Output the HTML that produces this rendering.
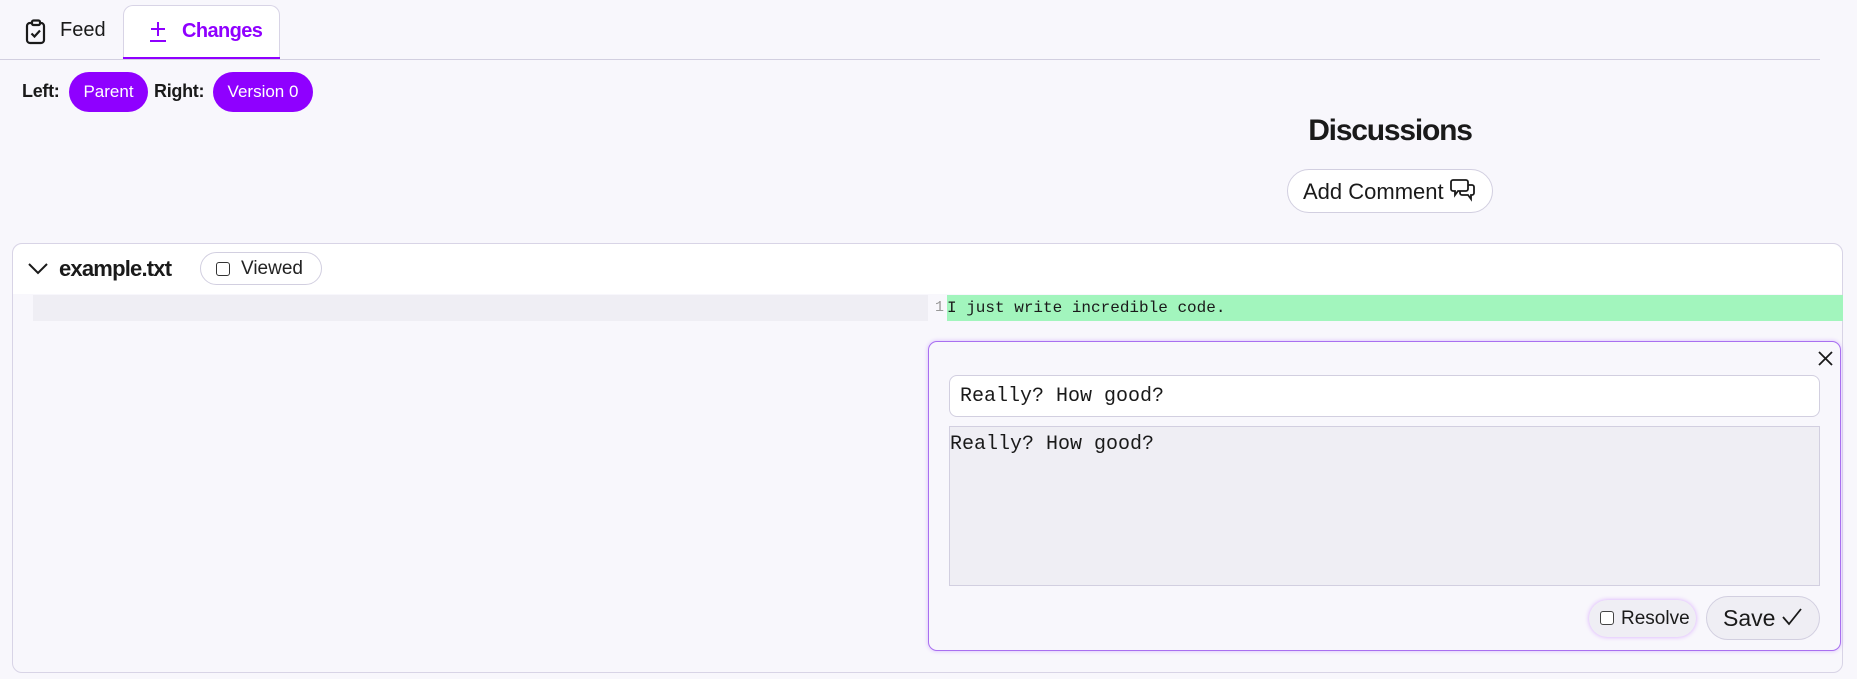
<!DOCTYPE html>
<html><head><style>
*{box-sizing:border-box;margin:0;padding:0}
body{width:1857px;height:679px;background:#f8f7fc;font-family:"Liberation Sans",sans-serif;color:#1a1a1a;position:relative;overflow:hidden}
.a{position:absolute}
.pill{background:#8f00ff;color:#fff;border-radius:20px;font-size:17px;display:flex;align-items:center;justify-content:center}
.mono{font-family:"Liberation Mono","DejaVu Sans Mono",monospace}
</style></head><body>
<svg class="a" style="left:25px;top:19px" width="22" height="26" viewBox="0 0 22 26" fill="none" stroke="#1a1a1a" stroke-width="2.2"><rect x="2" y="4" width="17" height="20" rx="3"/><rect x="7" y="1.5" width="8" height="4.5" rx="1.5" fill="#f8f7fc"/><path d="M6.5 14.5l3 3 5.5-6"/></svg>
<div class="a" style="left:60px;top:19px;font-size:20px">Feed</div>
<div class="a" style="left:123px;top:5px;width:157px;height:55px;background:#fff;border:1px solid #d8d4e6;border-bottom:none;border-radius:10px 10px 0 0"></div>
<div class="a" style="left:123px;top:57px;width:157px;height:3px;background:#8f00ff"></div>
<svg class="a" style="left:148px;top:21px" width="20" height="22" viewBox="0 0 20 22" stroke="#8f00ff" stroke-width="2"><path d="M10 1v14M3 8h14M2 20h16"/></svg>
<div class="a" style="left:182px;top:20px;font-size:20px;font-weight:bold;color:#8f00ff;letter-spacing:-0.6px">Changes</div>
<div class="a" style="left:0;top:59px;width:1820px;height:1px;background:#d2cfe0"></div>
<div class="a" style="left:22px;top:81px;font-size:18px;font-weight:bold;letter-spacing:-0.3px">Left:</div>
<div class="a pill" style="left:69px;top:72px;width:79px;height:40px">Parent</div>
<div class="a" style="left:154px;top:81px;font-size:18px;font-weight:bold;letter-spacing:-0.3px">Right:</div>
<div class="a pill" style="left:213px;top:72px;width:100px;height:40px">Version 0</div>
<div class="a" style="left:1290px;top:114px;width:200px;text-align:center;font-size:30px;font-weight:bold;letter-spacing:-1.2px">Discussions</div>
<div class="a" style="left:1287px;top:169px;width:206px;height:44px;background:#fff;border:1px solid #d2cfe0;border-radius:22px;font-size:22px;padding:9px 0 0 15px">Add Comment</div>
<svg class="a" style="left:1450px;top:178px" width="26" height="24" viewBox="0 0 26 24" fill="none" stroke="#1a1a1a" stroke-width="1.8"><path d="M3 2h13a2 2 0 0 1 2 2v7a2 2 0 0 1-2 2H8l-3 4v-4H3a2 2 0 0 1-2-2V4a2 2 0 0 1 2-2z"/><path d="M18 7h4a2 2 0 0 1 2 2v6a2 2 0 0 1-2 2h-1v4l-3-4h-6a2 2 0 0 1-2-2v-2"/></svg>
<div class="a" style="left:12px;top:243px;width:1831px;height:430px;border:1px solid #d8d4e6;border-radius:10px;background:#f8f7fc"></div>
<div class="a" style="left:13px;top:244px;width:1829px;height:50px;background:#fff;border-radius:10px 10px 0 0"></div>
<svg class="a" style="left:28px;top:262px" width="20" height="14" viewBox="0 0 20 14" fill="none" stroke="#1a1a1a" stroke-width="2"><path d="M1 2l9 9 9-9"/></svg>
<div class="a" style="left:59px;top:256px;font-size:22px;font-weight:bold;letter-spacing:-0.8px">example.txt</div>
<div class="a" style="left:200px;top:252px;width:122px;height:33px;border:1px solid #d2cfe0;border-radius:17px;background:#fff"></div>
<div class="a" style="left:216px;top:262px;width:14px;height:14px;border:1.5px solid #333;border-radius:3px"></div>
<div class="a" style="left:241px;top:258px;font-size:19px;color:#222">Viewed</div>
<div class="a" style="left:33px;top:295px;width:895px;height:26px;background:#efeef4"></div>
<div class="a mono" style="left:935px;top:299px;font-size:15px;color:#999">1</div>
<div class="a mono" style="left:947px;top:295px;width:896px;height:26px;background:#a2f5bd;font-size:16px;padding:4px 0 0 0">I just write incredible code.</div>
<div class="a" style="left:928px;top:341px;width:913px;height:310px;border:1.5px solid #a970f0;border-radius:9px;background:#f8f7fc;box-shadow:0 0 4px #d8b8ff"></div>
<svg class="a" style="left:1817px;top:350px" width="17" height="17" viewBox="0 0 17 17" stroke="#1a1a1a" stroke-width="1.8"><path d="M2 2l13 13M15 2L2 15"/></svg>
<div class="a mono" style="left:949px;top:375px;width:871px;height:42px;background:#fff;border:1px solid #d2cfe0;border-radius:8px;font-size:20px;padding:9px 0 0 10px">Really? How good?</div>
<div class="a mono" style="left:949px;top:426px;width:871px;height:160px;background:#efeef4;border:1px solid #d2cfe0;font-size:20px;padding:6px 0 0 0">Really? How good?</div>
<div class="a" style="left:1589px;top:600px;width:107px;height:37px;background:#efeef4;border-radius:19px;box-shadow:0 0 5px #d8a8ff"></div>
<div class="a" style="left:1600px;top:611px;width:14px;height:14px;border:1.5px solid #444;border-radius:3px;background:#fff"></div>
<div class="a" style="left:1621px;top:608px;font-size:19px">Resolve</div>
<div class="a" style="left:1706px;top:596px;width:114px;height:44px;background:#efeef4;border:1px solid #d2cfe0;border-radius:22px;font-size:23px;padding:8px 0 0 16px">Save</div>
<svg class="a" style="left:1781px;top:607px" width="22" height="20" viewBox="0 0 22 20" fill="none" stroke="#1a1a1a" stroke-width="1.8"><path d="M2 10l6 7L20 2"/></svg>
</body></html>
